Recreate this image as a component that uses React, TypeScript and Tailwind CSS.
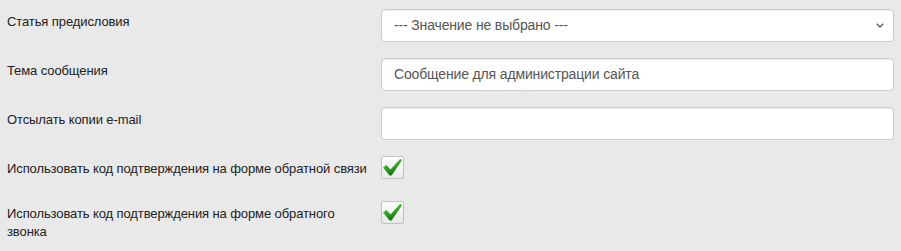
import React from "react";

const LABEL = "text-[13px] leading-[18px] tracking-[-0.1px] text-[#222]";
const FIELD =
  "h-[33px] w-full rounded-[4px] border border-[#ccc] bg-white px-[12px] text-[14px] tracking-[-0.15px] text-[#555] shadow-[inset_0_1px_1px_rgba(0,0,0,0.075)] flex items-center";

const CheckMark: React.FC = () => (
  <svg width="23" height="23" viewBox="0 0 23 23" className="block">
    <defs>
      <linearGradient id="box" x1="0" y1="0" x2="0" y2="1">
        <stop offset="0" stopColor="#fefefe" />
        <stop offset="1" stopColor="#e8e8e8" />
      </linearGradient>
      <linearGradient id="ck" x1="0" y1="0" x2="0.4" y2="1">
        <stop offset="0" stopColor="#5ccc3c" />
        <stop offset="0.6" stopColor="#2f9f22" />
        <stop offset="1" stopColor="#17700f" />
      </linearGradient>
    </defs>
    <rect x="0.5" y="0.5" width="22" height="22" rx="1.5" fill="url(#box)" stroke="#c2c2c2" />
    <path
      d="M2 11.5 L5.5 9 L9.5 13.5 L19.3 2.8 L21 4.3 L10.6 19.6 L8.6 19.6 Z"
      fill="url(#ck)"
    />
  </svg>
);

const Row: React.FC<{ label: string; children: React.ReactNode; className?: string }> = ({
  label,
  children,
  className = "",
}) => (
  <div className={`flex ${className}`}>
    <div className={`w-[374px] shrink-0 pl-[7px] pt-[4px] ${LABEL}`}>{label}</div>
    <div className="flex-1 pl-[7px] pr-[7px]">{children}</div>
  </div>
);

export default function App() {
  return (
    <div
      className="min-h-[251px] w-[901px] bg-[#e9e9e9] pt-[9px]"
      style={{ fontFamily: '"Liberation Sans", Arial, sans-serif' }}
    >
      <Row label="Статья предисловия" className="mb-[16px]">
        <div className={`${FIELD} justify-between`}>
          <span>--- Значение не выбрано ---</span>
          <svg width="8" height="5" viewBox="0 0 8 5" className="mr-[-3px]">
            <path d="M0.8 0.8 L4 4 L7.2 0.8" stroke="#555" strokeWidth="1.3" fill="none" />
          </svg>
        </div>
      </Row>
      <Row label="Тема сообщения" className="mb-[16px]">
        <div className={FIELD}>Сообщение для администрации сайта</div>
      </Row>
      <Row label="Отсылать копии e-mail" className="mb-[16px]">
        <div className={FIELD}></div>
      </Row>
      <Row label="Использовать код подтверждения на форме обратной связи" className="mb-[22px]">
        <CheckMark />
      </Row>
      <Row label="Использовать код подтверждения на форме обратного звонка">
        <CheckMark />
      </Row>
    </div>
  );
}
